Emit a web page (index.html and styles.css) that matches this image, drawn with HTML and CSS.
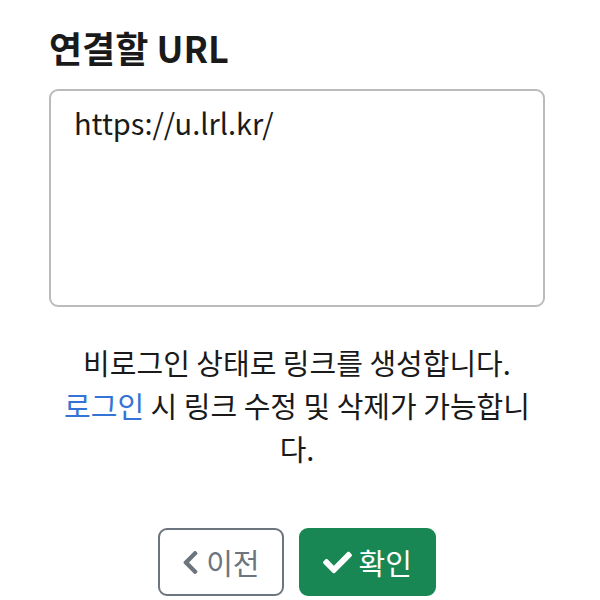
FILE: index.html
```html
<!DOCTYPE html>
<html>
<head>
  <title>링크 생성</title>
  <link rel="stylesheet" href="styles.css">
</head>
<body>
  <div class="container">
    <h1 class="title">연결할 URL</h1>
    <div class="url-box">https://u.lrl.kr/</div>

    <p class="notice">
      비로그인 상태로 링크를 생성합니다.<br>
      <a href="#" class="login-link">로그인</a> 시 링크 수정 및 삭제가 가능합니다.
    </p>

    <div class="actions">
      <button class="btn btn-outline">
        <svg class="icon" viewBox="0 0 320 512" width="17" height="27"><path fill="currentColor" d="M34.5 239L228.9 44.7c9.4-9.4 24.6-9.4 33.9 0l22.7 22.7c9.4 9.4 9.4 24.5 0 33.9L131.5 256l154 154.8c9.3 9.4 9.3 24.5 0 33.9l-22.7 22.7c-9.4 9.4-24.6 9.4-33.9 0L34.5 273c-9.4-9.4-9.4-24.6 0-34z"/></svg>
        이전
      </button>
      <button class="btn btn-success">
        <svg class="icon" viewBox="0 0 512 512" width="29" height="29"><path fill="currentColor" d="M173.9 439.4L7.5 273c-10-10-10-26.2 0-36.2l36.2-36.2c10-10 26.2-10 36.2 0L192 312.7 432.1 72.6c10-10 26.2-10 36.2 0l36.2 36.2c10 10 10 26.2 0 36.2L210.1 439.4c-10 10-26.2 10-36.2 0z"/></svg>
        확인
      </button>
    </div>
  </div>
</body>
</html>
```

FILE: styles.css
```css
body {
  margin: 0;
  font-family: "Noto Sans CJK KR", "Noto Sans", sans-serif;
  color: #1a1a1a;
  background: #fff;
}
.container {
  width: 496px;
  margin-left: 49px;
  padding-top: 26px;
}
.title {
  margin: 0 0 20px;
  font-size: 36px;
  font-weight: 700;
  line-height: 1.2;
}
.url-box {
  box-sizing: border-box;
  height: 218px;
  padding: 10px 23px;
  border: 2px solid #bbbbbb;
  border-radius: 9px;
  font-size: 29px;
  line-height: 1.5;
}
.notice {
  margin: 34px 0 0;
  text-align: center;
  font-size: 29px;
  line-height: 43px;
}
.login-link {
  color: #3474d6;
  text-decoration: none;
}
.actions {
  display: flex;
  justify-content: center;
  gap: 15px;
  margin-top: 58px;
}
.btn {
  display: flex;
  align-items: center;
  gap: 7px;
  height: 68px;
  padding: 0 22px;
  border-radius: 9px;
  font-family: inherit;
  font-size: 29px;
  cursor: pointer;
}
.btn-outline {
  background: #fff;
  color: #6c757d;
  border: 2px solid #6c757d;
}
.btn-success {
  background: #198754;
  color: #fff;
  border: 2px solid #198754;
}
.icon {
  display: block;
}
```
